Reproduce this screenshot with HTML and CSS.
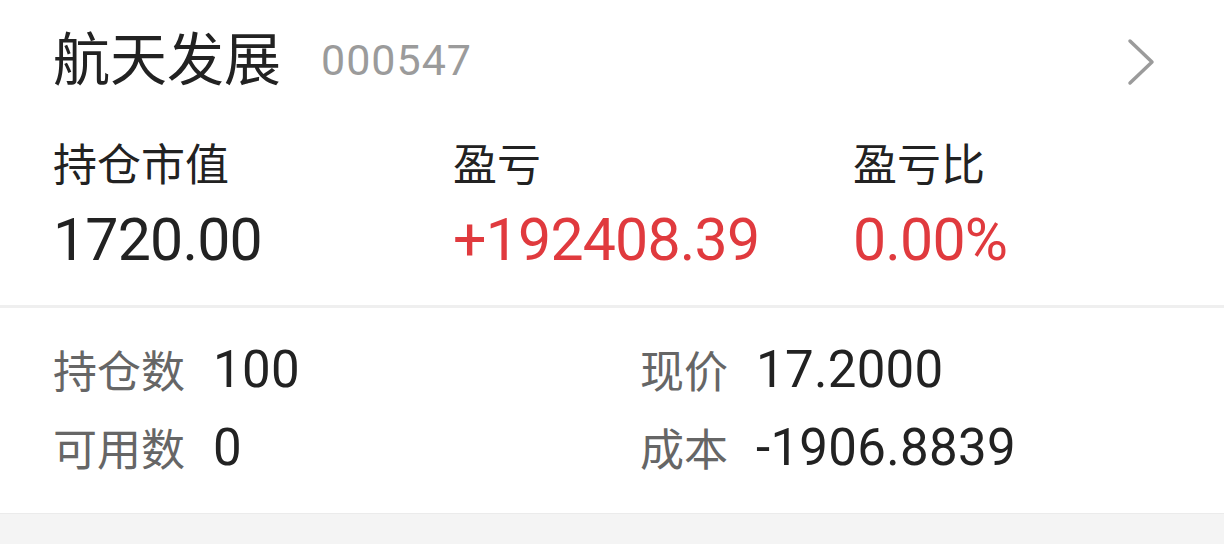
FILE: index.html
```html
<!DOCTYPE html>
<html>
<head>
	<meta http-equiv="Content-Type" content="text/html; charset=utf-8" />
	<title>持仓详情</title>
	<link rel="stylesheet" href="styles.css">
</head>
<body>
	<div class="card">
		<div class="head">
			<span class="name">航天发展</span>
			<span class="code">000547</span>
			<svg class="arrow" width="30" height="50" viewBox="0 0 30 50"><polyline points="4,4 26,25 4,46" fill="none" stroke="#9b9b9b" stroke-width="3.5" stroke-linecap="round" stroke-linejoin="round"/></svg>
		</div>
		<ul class="summary">
			<li><label>持仓市值</label><p>1720.00</p></li>
			<li><label>盈亏</label><p class="up">+192408.39</p></li>
			<li><label>盈亏比</label><p class="up">0.00%</p></li>
		</ul>
		<ul class="detail">
			<li><label>持仓数</label><span>100</span></li>
			<li><label>现价</label><span>17.2000</span></li>
			<li><label>可用数</label><span>0</span></li>
			<li><label>成本</label><span>-1906.8839</span></li>
		</ul>
	</div>
	<div class="foot"></div>
</body>
</html>
```
FILE: styles.css
```css
*{margin: 0;padding: 0;}
html,body{ height: 100%; }
body{ display: flex; flex-direction: column; background: #f4f4f4; font-family: Roboto, "Noto Sans CJK SC", sans-serif; color: #222; }
ul,li{list-style: none;}
.card{ background: #fff; }
.head{ display: flex; align-items: center; height: 120px; padding: 0 68px 0 53px; }
.head .name{ font-size: 57px; line-height: 1; }
.head .code{ margin-left: 40px; font-size: 43px; line-height: 1; color: #9b9b9b; letter-spacing: 1px; }
.head .arrow{ margin: 4px 0 0 auto; }
.summary{ display: grid; grid-template-columns: 400px 400px 400px; padding: 21px 0 33px 53px; border-bottom: 3px solid #efefef; }
.summary label{ display: block; height: 50px; line-height: 50px; font-size: 44px; }
.summary p{ margin-top: 17px; height: 64px; line-height: 64px; font-size: 59px; letter-spacing: -0.8px; }
.summary p.up{ color: #e03a3e; }
.detail{ display: grid; grid-template-columns: 587px 1fr; row-gap: 18px; padding: 31px 0 36px 53px; }
.detail li{ display: flex; align-items: center; height: 60px; }
.detail label{ font-size: 44px; color: #666; }
.detail span{ margin-left: 28px; font-size: 51px; letter-spacing: 0.3px; }
.foot{ flex: 1; border-top: 1px solid #ebebeb; }
```
